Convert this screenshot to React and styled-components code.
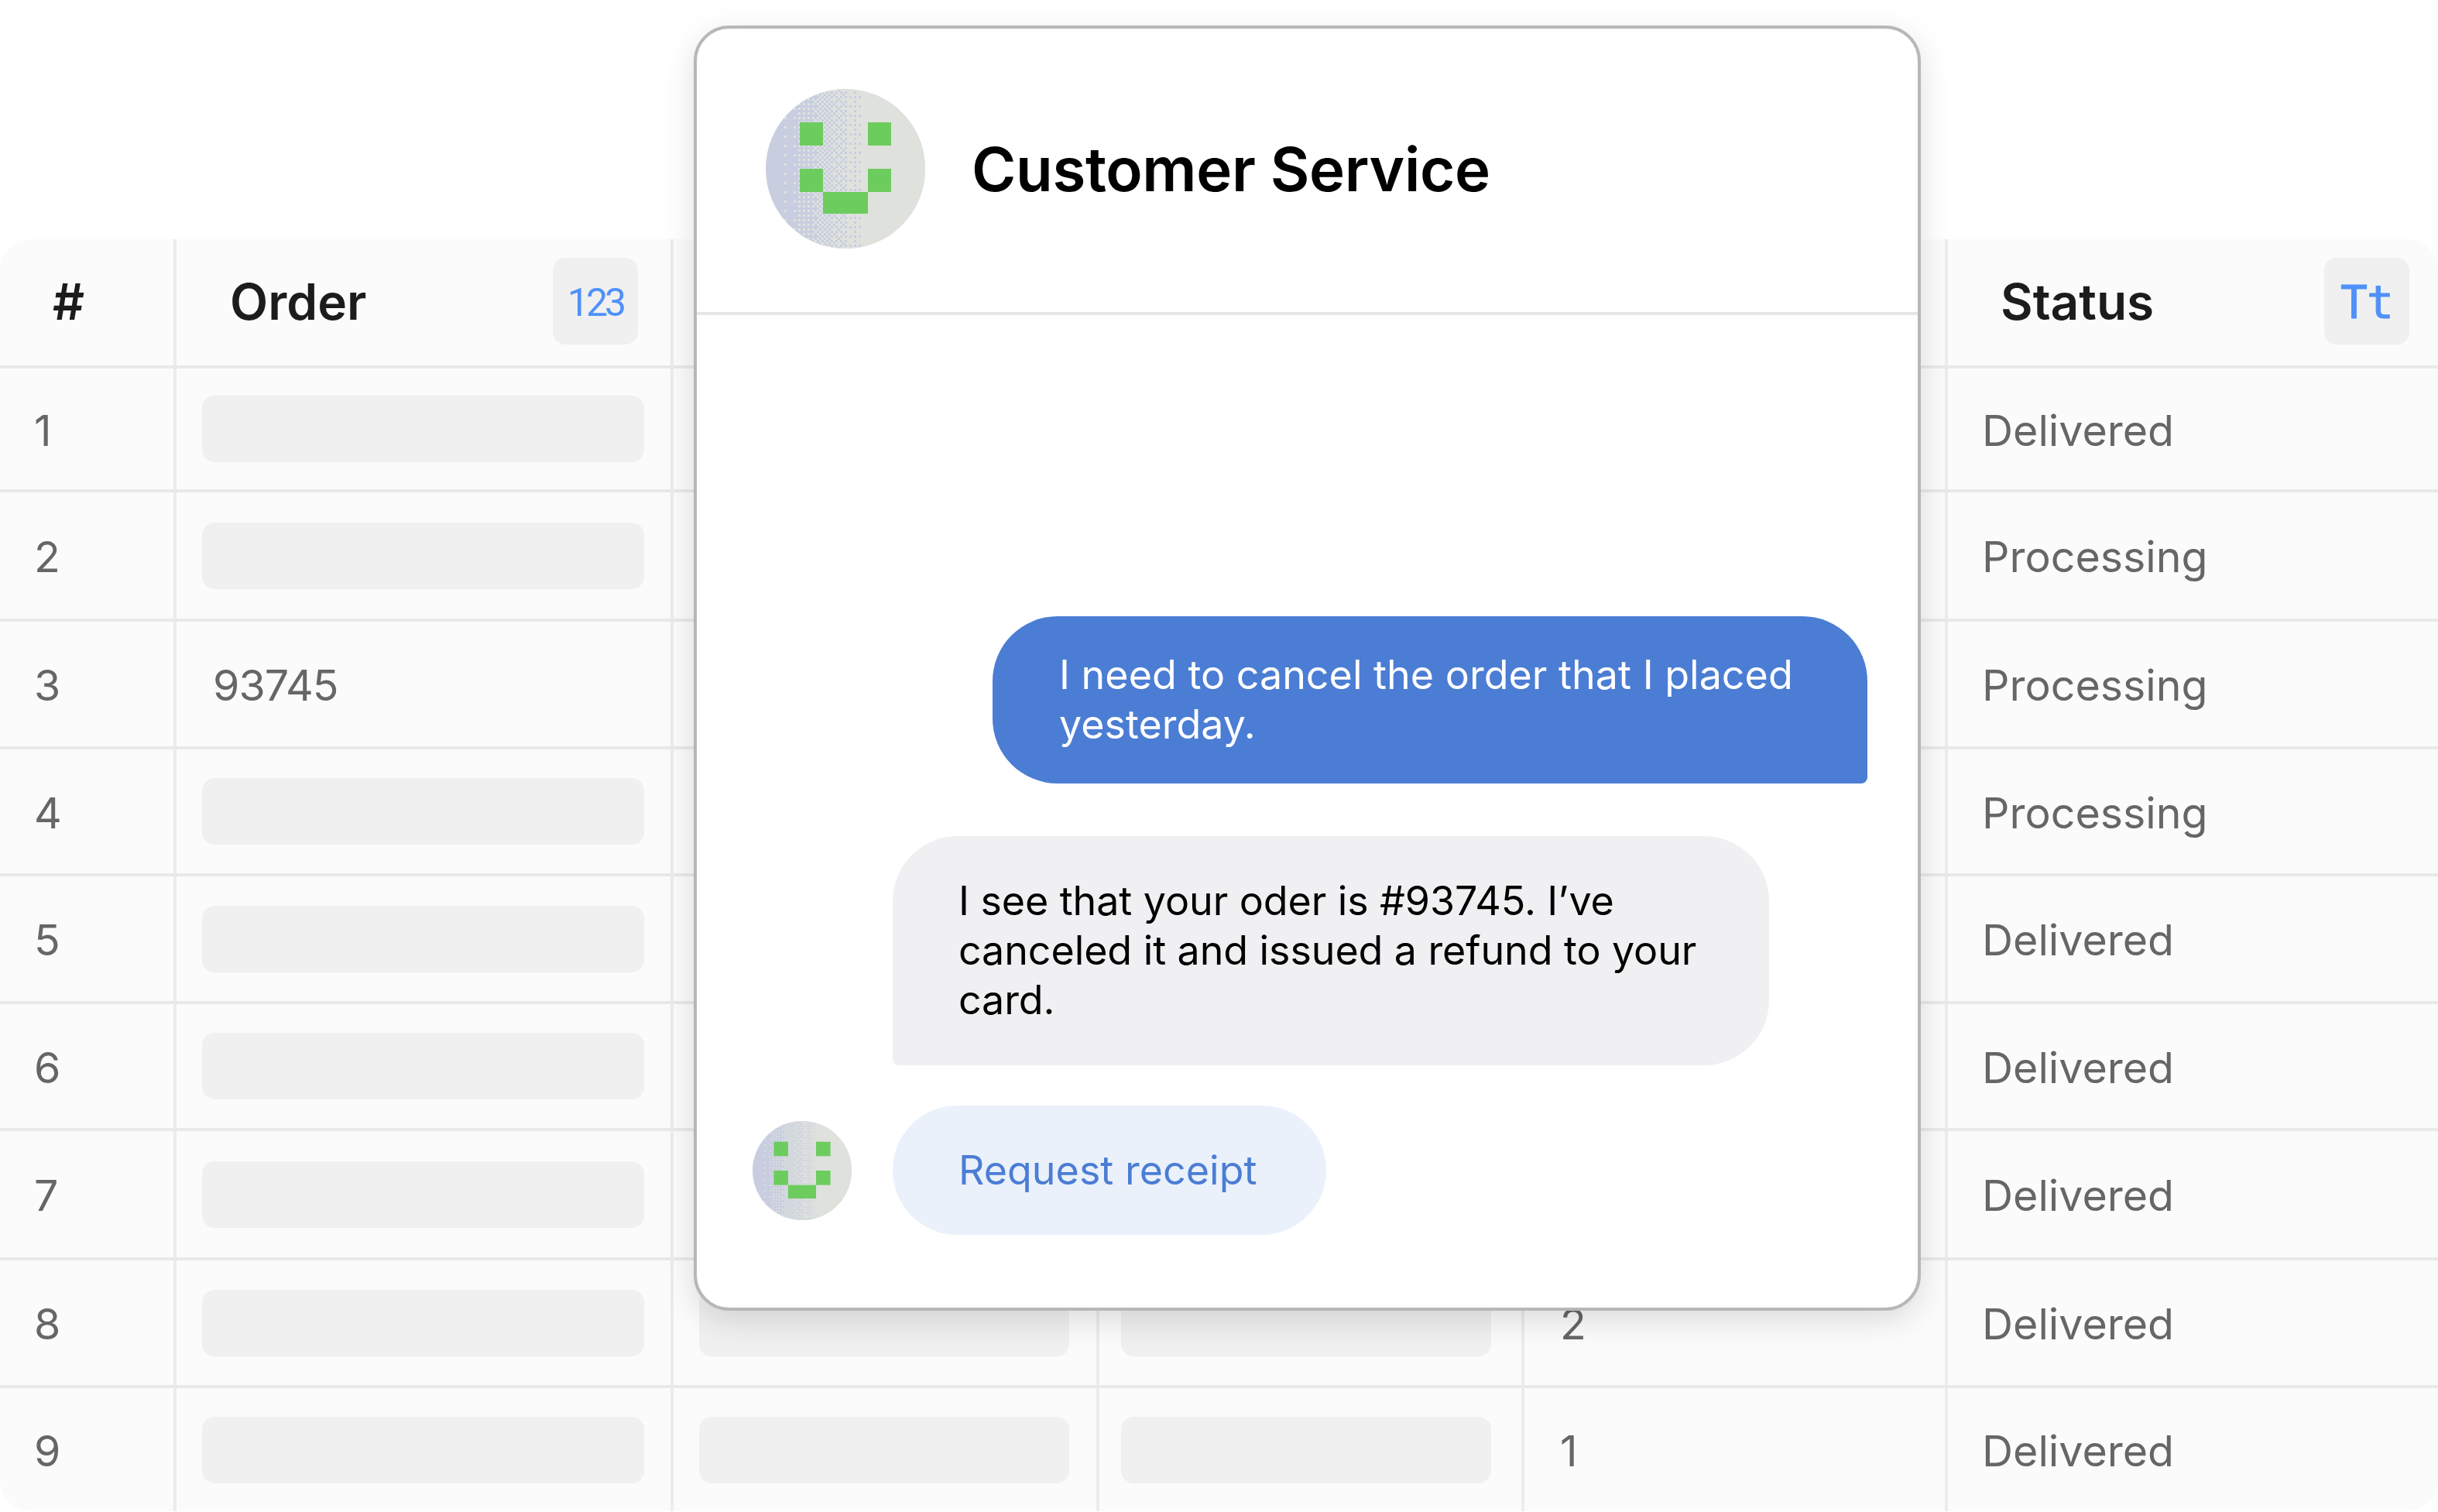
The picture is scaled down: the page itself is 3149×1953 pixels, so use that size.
import React from "react"
import styled, { createGlobalStyle } from "styled-components"

const GlobalStyle = createGlobalStyle`
  html, body {
    margin: 0;
    padding: 0;
    background: #fff;
    font-family: Inter, "Liberation Sans", sans-serif;
  }
`

const Page = styled.div`
  position: relative;
  width: 3149px;
  height: 1953px;
  overflow: hidden;
  padding-top: 309px;
  box-sizing: border-box;
  background: #fff;
`

const Table = styled.div`
  display: grid;
  grid-template-rows: 167px 160px 167px 165px 164px 165px 164px 167px 165px 159px;
  background: #fbfbfb;
  border-radius: 40px;
`

const Row = styled.div`
  display: grid;
  grid-template-columns: 228px 642px 550px 549px 547px 1fr;
  box-sizing: border-box;
  border-bottom: 4px solid #e9e9e9;

  &:last-child {
    border-bottom: 0;
  }
`

const Cell = styled.div`
  display: flex;
  align-items: center;
  box-sizing: border-box;
  padding-left: ${(p) => p.$pad || 0}px;
  border-right: 4px solid #ececec;
  font-size: 55.5px;
  color: #666;
  min-width: 0;

  &:last-child {
    border-right: 0;
  }
`

const CellText = styled.span`
  margin-top: 2px;
  letter-spacing: ${(p) => (p.$tight ? -1 : 0)}px;
`

const HeadCell = styled(Cell)`
  justify-content: space-between;
  padding-bottom: 3px;
  font-size: 64px;
  font-weight: 600;
  color: #1c1c1c;
`

const TypeBadge = styled.span`
  display: flex;
  align-items: center;
  justify-content: center;
  width: 110px;
  height: 112px;
  box-sizing: border-box;
  padding-top: 3px;
  margin-right: ${(p) => p.$right}px;
  border-radius: 16px;
  background: #f0f0f0;
  color: #4f91f9;
  font-family: Roboto, sans-serif;
  font-size: 50px;
  font-weight: 400;
  letter-spacing: -4px;
`

const MonoBadge = styled(TypeBadge)`
  font-family: "DejaVu Sans Mono", monospace;
  font-size: 58px;
  letter-spacing: -1px;
  -webkit-text-stroke: 1px #4f91f9;
`

const Pill = styled.div`
  width: ${(p) => p.$width}px;
  height: 86px;
  border-radius: 16px;
  background: #f0f0f0;
`

const ChatCard = styled.div`
  position: absolute;
  top: 33px;
  left: 896px;
  width: 1585px;
  height: 1660px;
  box-sizing: border-box;
  display: flex;
  flex-direction: column;
  background: #fff;
  border: 4px solid #b7b7b7;
  border-radius: 46px;
  box-shadow: 0 12px 40px rgba(0, 0, 0, 0.13);
`

const ChatHeader = styled.div`
  display: flex;
  align-items: center;
  gap: 60px;
  height: 370px;
  flex: none;
  box-sizing: border-box;
  padding-left: 89px;
  padding-bottom: 4px;
  border-bottom: 4px solid #e6e6e6;
`

const Title = styled.h1`
  margin: 0;
  font-size: 78px;
  font-weight: 600;
  letter-spacing: -0.4px;
  color: #000;
`

const Thread = styled.div`
  flex: 1;
  display: flex;
  flex-direction: column;
  justify-content: flex-end;
  padding: 0 65px 94px 72px;
`

const Bubble = styled.div`
  box-sizing: border-box;
  font-size: 52px;
  line-height: 64px;
`

const UserBubble = styled(Bubble)`
  align-self: flex-end;
  width: 1130px;
  padding: 44px 78px 44px 86px;
  margin-bottom: 68px;
  background: #4b7dd4;
  color: #fff;
  border-radius: 84px 84px 8px 84px;
`

const AgentBubble = styled(Bubble)`
  width: 1132px;
  margin-left: 181px;
  padding: 52px 80px 52px 85px;
  margin-bottom: 52px;
  background: #f0f0f2;
  color: #000;
  letter-spacing: -0.1px;
  border-radius: 84px 84px 84px 8px;
`

const ActionRow = styled.div`
  display: flex;
  align-items: center;
  gap: 53px;
`

const ActionButton = styled.div`
  display: flex;
  align-items: center;
  height: 167px;
  box-sizing: border-box;
  padding: 0 89px 0 85px;
  border-radius: 84px;
  background: #eaf1fb;
  color: #4b7dd4;
  font-size: 52px;
`

const AvatarSvg = styled.svg`
  display: block;
  flex: none;
  width: ${(p) => p.$size}px;
  height: ${(p) => p.$size}px;
`

// ordered dither between the two avatar colours
const bayer = [
  [0, 8, 2, 10],
  [12, 4, 14, 6],
  [3, 11, 1, 9],
  [15, 7, 13, 5],
]

const ditherCells = []
for (let i = 0; i < 44; i++) {
  for (let j = 0; j < 69; j++) {
    const x = i * 3
    const chance = Math.min(1, Math.max(0, (x - 20) / 112))
    if ((bayer[j % 4][i % 4] + 0.5) / 16 < chance) ditherCells.push([x, j * 3])
  }
}

const Avatar = ({ size }) => {
  const clipId = `avatar-clip-${size}`
  return (
    <AvatarSvg $size={size} viewBox="0 0 206 206">
      <defs>
        <clipPath id={clipId}>
          <circle cx="103" cy="103" r="103" />
        </clipPath>
      </defs>
      <g clipPath={`url(#${clipId})`}>
        <rect width="206" height="206" fill="#c8cee0" />
        <rect x="132" width="74" height="206" fill="#dfe2dc" />
        {ditherCells.map(([x, y]) => (
          <rect key={`${x}-${y}`} x={x} y={y} width="3" height="3" fill="#dfe2dc" />
        ))}
      </g>
      <g fill="#6dcc5e">
        <rect x="44" y="43" width="30" height="30" />
        <rect x="132" y="43" width="30" height="30" />
        <rect x="44" y="103" width="30" height="30" />
        <rect x="132" y="103" width="30" height="30" />
        <rect x="74" y="133" width="58" height="28" />
      </g>
    </AvatarSvg>
  )
}

// qty only for the rows the chat card does not cover
const rows = [
  { n: 1, status: "Delivered" },
  { n: 2, status: "Processing" },
  { n: 3, order: "93745", status: "Processing" },
  { n: 4, status: "Processing" },
  { n: 5, status: "Delivered" },
  { n: 6, status: "Delivered" },
  { n: 7, status: "Delivered" },
  { n: 8, qty: 2, status: "Delivered" },
  { n: 9, qty: 1, status: "Delivered" },
]

const App = () => {
  return (
    <Page>
      <GlobalStyle />
      <Table>
        <Row>
          <HeadCell $pad={68}>#</HeadCell>
          <HeadCell $pad={69}>
            Order
            <TypeBadge $right={42}>123</TypeBadge>
          </HeadCell>
          <HeadCell />
          <HeadCell />
          <HeadCell />
          <HeadCell $pad={68}>
            Status
            <MonoBadge $right={37}>Tt</MonoBadge>
          </HeadCell>
        </Row>
        {rows.map((row) => (
          <Row key={row.n}>
            <Cell $pad={44}>
              <CellText>{row.n}</CellText>
            </Cell>
            <Cell $pad={row.order ? 47 : 33}>
              {row.order ? <CellText $tight>{row.order}</CellText> : <Pill $width={571} />}
            </Cell>
            <Cell $pad={33}>
              <Pill $width={478} />
            </Cell>
            <Cell $pad={28}>
              <Pill $width={478} />
            </Cell>
            <Cell $pad={46}>
              <CellText>{row.qty}</CellText>
            </Cell>
            <Cell $pad={44}>
              <CellText>{row.status}</CellText>
            </Cell>
          </Row>
        ))}
      </Table>
      <ChatCard>
        <ChatHeader>
          <Avatar size={206} />
          <Title>Customer Service</Title>
        </ChatHeader>
        <Thread>
          <UserBubble>I need to cancel the order that I placed yesterday.</UserBubble>
          <AgentBubble>I see that your oder is #93745. I’ve canceled it and issued a refund to your card.</AgentBubble>
          <ActionRow>
            <Avatar size={128} />
            <ActionButton>Request receipt</ActionButton>
          </ActionRow>
        </Thread>
      </ChatCard>
    </Page>
  )
}

export default App
